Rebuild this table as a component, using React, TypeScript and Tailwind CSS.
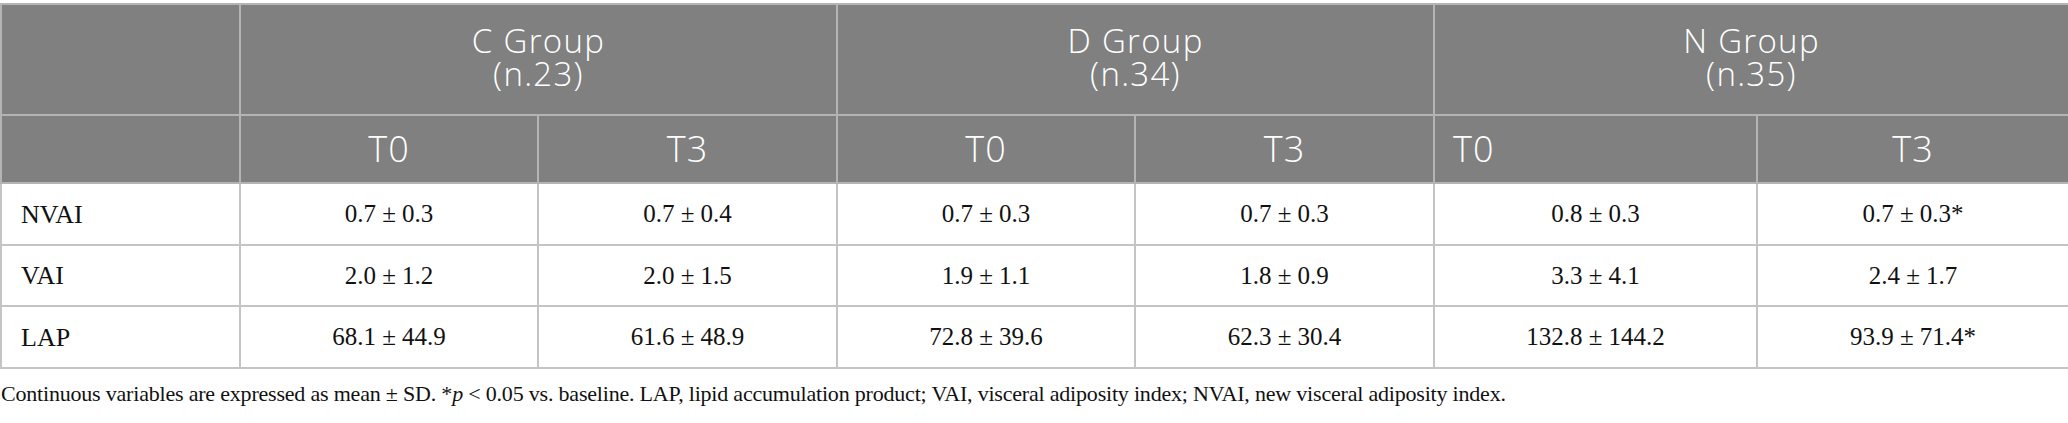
const groups = [
  { name: "C Group", n: "(n.23)" },
  { name: "D Group", n: "(n.34)" },
  { name: "N Group", n: "(n.35)" },
];

const rows = [
  { label: "NVAI", values: ["0.7 ± 0.3", "0.7 ± 0.4", "0.7 ± 0.3", "0.7 ± 0.3", "0.8 ± 0.3", "0.7 ± 0.3*"] },
  { label: "VAI", values: ["2.0 ± 1.2", "2.0 ± 1.5", "1.9 ± 1.1", "1.8 ± 0.9", "3.3 ± 4.1", "2.4 ± 1.7"] },
  { label: "LAP", values: ["68.1 ± 44.9", "61.6 ± 48.9", "72.8 ± 39.6", "62.3 ± 30.4", "132.8 ± 144.2", "93.9 ± 71.4*"] },
];

const cols = [239, 298, 299, 298, 299, 323, 312];

export default function App() {
  return (
    <div className="w-[2068px] h-[423px] bg-white pt-[3px]">
      <table className="table-fixed border-collapse w-[2068px]">
        <colgroup>
          {cols.map((w, i) => (
            <col key={i} style={{ width: w }} />
          ))}
        </colgroup>
        <thead className="bg-[#7f807f] text-white font-['Open_Sans',sans-serif] font-light">
          <tr className="h-[111px]">
            <th className="border-2 border-[#b4b4b4]" />
            {groups.map((g) => (
              <th
                key={g.name}
                colSpan={2}
                className="border-2 border-[#b4b4b4] text-[33px] tracking-[1.3px] leading-[33px] font-light text-center pb-[6px]"
              >
                <div>{g.name}</div>
                <div>{g.n}</div>
              </th>
            ))}
          </tr>
          <tr className="h-[68px]">
            <th className="border-2 border-[#b4b4b4]" />
            {["T0", "T3", "T0", "T3", "T0", "T3"].map((t, i) => (
              <th
                key={i}
                className={`border-2 border-[#b4b4b4] text-[36px] tracking-[1px] leading-[42px] font-light ${
                  i === 4 ? "text-left pl-[18px]" : "text-center"
                }`}
              >
                {t}
              </th>
            ))}
          </tr>
        </thead>
        <tbody className="font-['Liberation_Serif',serif] text-[25px] text-[#111]">
          {rows.map((r, ri) => (
            <tr key={r.label} className={ri === 1 ? "h-[61px]" : "h-[62px]"}>
              <td className="border-2 border-[#c4c4c4] pl-[19px] text-left text-[26px]">{r.label}</td>
              {r.values.map((v, i) => (
                <td key={i} className="border-2 border-[#c4c4c4] text-center">
                  {v}
                </td>
              ))}
            </tr>
          ))}
        </tbody>
      </table>
      <p className="font-['Liberation_Serif',serif] text-[22px] tracking-[-0.2px] leading-[30px] text-[#111] mt-[10px] pl-[1px]">
        Continuous variables are expressed as mean ± SD. *<i>p</i> &lt; 0.05 vs. baseline. LAP, lipid accumulation
        product; VAI, visceral adiposity index; NVAI, new visceral adiposity index.
      </p>
    </div>
  );
}
